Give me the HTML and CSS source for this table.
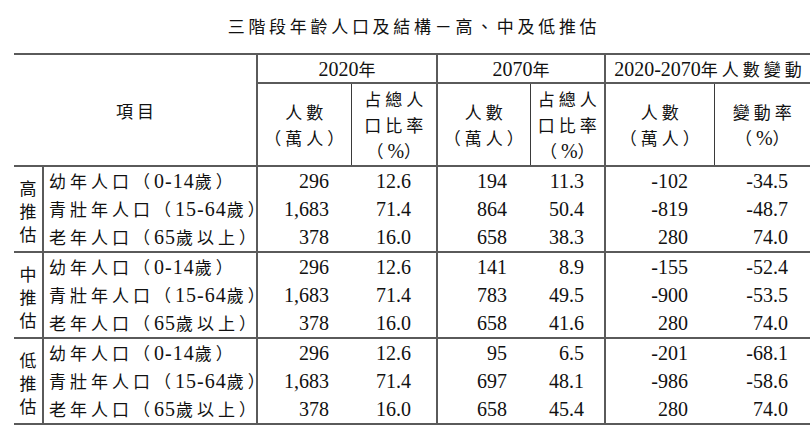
FILE: index.html
```html
<!DOCTYPE html>
<html lang="zh-Hant">
<head>
<meta charset="utf-8">
<title>三階段年齡人口及結構－高、中及低推估</title>
<link rel="stylesheet" href="styles.css">
</head>
<body>
<div class="page">
  <h1 class="title">三階段年齡人口及結構－高、中及低推估</h1>
  <table class="pop">
    <colgroup>
      <col class="c-grp"><col class="c-item"><col class="c-a"><col class="c-b"><col class="c-c"><col class="c-d"><col class="c-e"><col class="c-f">
    </colgroup>
    <thead>
      <tr class="h1">
        <th colspan="2" rowspan="2" class="item-h">項目</th>
        <th colspan="2" class="yr lm"><span class="d">2020</span>年</th>
        <th colspan="2" class="yr lm"><span class="d">2070</span>年</th>
        <th colspan="2" class="yr lm"><span class="d">2020-2070</span>年人數變動</th>
      </tr>
      <tr class="h2">
        <th class="sub lm">人數<br>（萬人）</th>
        <th class="sub ls">占總人<br>口比率<br>（<span class="d">%</span>）</th>
        <th class="sub lm">人數<br>（萬人）</th>
        <th class="sub ls">占總人<br>口比率<br>（<span class="d">%</span>）</th>
        <th class="sub lm">人數<br>（萬人）</th>
        <th class="sub ls">變動率<br>（<span class="d">%</span>）</th>
      </tr>
    </thead>
    <tbody class="grp">
      <tr>
        <td rowspan="3" class="glabel">高推估</td>
        <td class="item lm">幼年人口（<span class="d">0-14</span>歲）</td>
        <td class="num lm pa">296</td><td class="num pb">12.6</td>
        <td class="num lm pc">194</td><td class="num pd">11.3</td>
        <td class="num lm pe">-102</td><td class="num pf">-34.5</td>
      </tr>
      <tr>
        <td class="item lm">青壯年人口（<span class="d">15-64</span>歲）</td>
        <td class="num lm pa">1,683</td><td class="num pb">71.4</td>
        <td class="num lm pc">864</td><td class="num pd">50.4</td>
        <td class="num lm pe">-819</td><td class="num pf">-48.7</td>
      </tr>
      <tr>
        <td class="item lm">老年人口（<span class="d">65</span>歲以上）</td>
        <td class="num lm pa">378</td><td class="num pb">16.0</td>
        <td class="num lm pc">658</td><td class="num pd">38.3</td>
        <td class="num lm pe">280</td><td class="num pf">74.0</td>
      </tr>
    </tbody>
    <tbody class="grp">
      <tr>
        <td rowspan="3" class="glabel">中推估</td>
        <td class="item lm">幼年人口（<span class="d">0-14</span>歲）</td>
        <td class="num lm pa">296</td><td class="num pb">12.6</td>
        <td class="num lm pc">141</td><td class="num pd">8.9</td>
        <td class="num lm pe">-155</td><td class="num pf">-52.4</td>
      </tr>
      <tr>
        <td class="item lm">青壯年人口（<span class="d">15-64</span>歲）</td>
        <td class="num lm pa">1,683</td><td class="num pb">71.4</td>
        <td class="num lm pc">783</td><td class="num pd">49.5</td>
        <td class="num lm pe">-900</td><td class="num pf">-53.5</td>
      </tr>
      <tr>
        <td class="item lm">老年人口（<span class="d">65</span>歲以上）</td>
        <td class="num lm pa">378</td><td class="num pb">16.0</td>
        <td class="num lm pc">658</td><td class="num pd">41.6</td>
        <td class="num lm pe">280</td><td class="num pf">74.0</td>
      </tr>
    </tbody>
    <tbody class="grp">
      <tr>
        <td rowspan="3" class="glabel">低推估</td>
        <td class="item lm">幼年人口（<span class="d">0-14</span>歲）</td>
        <td class="num lm pa">296</td><td class="num pb">12.6</td>
        <td class="num lm pc">95</td><td class="num pd">6.5</td>
        <td class="num lm pe">-201</td><td class="num pf">-68.1</td>
      </tr>
      <tr>
        <td class="item lm">青壯年人口（<span class="d">15-64</span>歲）</td>
        <td class="num lm pa">1,683</td><td class="num pb">71.4</td>
        <td class="num lm pc">697</td><td class="num pd">48.1</td>
        <td class="num lm pe">-986</td><td class="num pf">-58.6</td>
      </tr>
      <tr>
        <td class="item lm">老年人口（<span class="d">65</span>歲以上）</td>
        <td class="num lm pa">378</td><td class="num pb">16.0</td>
        <td class="num lm pc">658</td><td class="num pd">45.4</td>
        <td class="num lm pe">280</td><td class="num pf">74.0</td>
      </tr>
    </tbody>
  </table>
</div>
</body>
</html>
```

FILE: styles.css
```css
html, body {
  margin: 0;
  padding: 0;
  background: #ffffff;
  color: #111111;
}

.page {
  padding-left: 14px;
  width: 796px;
  font-family: "Noto Sans CJK TC", sans-serif;
}

.title {
  margin: 0;
  height: 53px;
  line-height: 52px;
  font-size: 17px;
  font-weight: normal;
  letter-spacing: 3.7px;
  text-align: center;
  padding-left: 4px;
}

.pop {
  width: 796px;
  table-layout: fixed;
  border-collapse: collapse;
  border-top: 2px solid #5a5a5a;
  border-bottom: 2px solid #5a5a5a;
  font-size: 17px;
  letter-spacing: 4px;
}

.c-grp { width: 29px; }
.c-item { width: 214px; }
.c-a { width: 94px; }
.c-b { width: 86px; }
.c-c { width: 93px; }
.c-d { width: 75px; }
.c-e { width: 109px; }
.c-f { width: 96px; }

.pop th,
.pop td {
  padding: 0;
  font-weight: normal;
}

.d {
  font-family: "Liberation Serif", "Times New Roman", serif;
  font-size: 20px;
  letter-spacing: 0;
}

.h1 { height: 29px; }
.h2 { height: 83px; }

.pop .item-h {
  text-align: center;
  vertical-align: middle;
  padding-left: 4px;
}

.pop .yr {
  text-align: center;
  line-height: 26px;
  border-bottom: 2px solid #5a5a5a;
  padding-left: 4px;
}

.pop .sub {
  text-align: center;
  vertical-align: middle;
  line-height: 26px;
  padding-left: 4px;
}

.pop .lm { border-left: 2px solid #5a5a5a; }
.pop .ls { border-left: 1px solid #3a3a3a; }

.grp { border-top: 2px solid #5a5a5a; }

.grp tr { height: 28px; }

.pop .glabel {
  text-align: center;
  vertical-align: middle;
  line-height: 23px;
  letter-spacing: 0;
  padding-top: 2px;
}

.pop .item {
  line-height: 28px;
  padding-left: 5px;
  white-space: nowrap;
}

.item .d {
  letter-spacing: 1px;
}

.pop .num {
  text-align: right;
  line-height: 28px;
  font-family: "Liberation Serif", "Times New Roman", serif;
  font-size: 20px;
  letter-spacing: 0;
}

.pop .pa { padding-right: 22px; }
.pop .pb { padding-right: 25px; }
.pop .pc { padding-right: 23px; }
.pop .pd { padding-right: 20px; }
.pop .pe { padding-right: 26px; }
.pop .pf { padding-right: 22px; }
```
